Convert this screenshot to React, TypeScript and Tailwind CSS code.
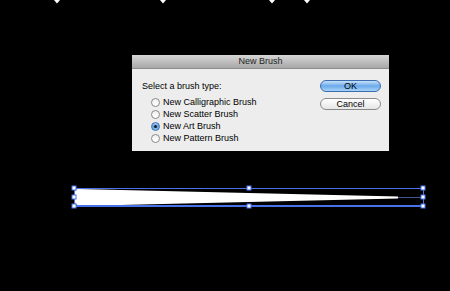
import React from 'react';

const font = { fontFamily: '"Lucida Grande", "Liberation Sans", Arial, sans-serif' };

const markers = [57, 163, 272, 307];

const Radio = ({ checked }: { checked?: boolean }) =>
  checked ? (
    <span className="w-[9px] h-[9px] rounded-full border border-[#3d6fb5] bg-gradient-to-b from-[#a9cdf2] via-[#5d9de0] to-[#8fc1f0] flex items-center justify-center">
      <span className="w-[3px] h-[3px] rounded-full bg-[#1a1a1a]" />
    </span>
  ) : (
    <span className="w-[9px] h-[9px] rounded-full border border-[#8a8a8a] bg-gradient-to-b from-[#f0f0f0] to-[#ffffff]" />
  );

const options = [
  { label: 'New Calligraphic Brush' },
  { label: 'New Scatter Brush' },
  { label: 'New Art Brush', checked: true },
  { label: 'New Pattern Brush' },
];

const handles: [number, number][] = [
  [74, 4], [74, 13], [74, 22],
  [249, 4], [249, 22],
  [423, 4], [423, 13], [423, 22],
];

export default function App() {
  return (
    <div className="w-[450px] h-[291px] bg-black overflow-hidden flex flex-col" style={font}>
      {/* cut-off arrow tips along the top edge */}
      <svg width={450} height={4} className="block">
        {markers.map((x) => (
          <path key={x} d={`M${x - 3},0 L${x + 3},0 L${x},3.5 Z`} fill="#ffffff" />
        ))}
      </svg>

      {/* dialog */}
      <div className="ml-[132px] mt-[51px] w-[257px] h-[96px] flex flex-col bg-[#ededed]">
        <div className="h-[14px] bg-gradient-to-b from-[#d6d6d6] to-[#a8a8a8] border-b border-[#8c8c8c] flex items-center justify-center text-[9px] leading-none text-[#1e1e1e]">
          New Brush
        </div>
        <div className="flex flex-1 text-[9px] leading-[12px] text-black">
          <div className="flex-1 pl-[10px] pt-[11px]">
            <div>Select a brush type:</div>
            <div className="mt-[4px] ml-[9px] flex flex-col">
              {options.map((o) => (
                <div key={o.label} className="h-[12px] flex items-center gap-[3px]">
                  <Radio checked={o.checked} />
                  <span>{o.label}</span>
                </div>
              ))}
            </div>
          </div>
          <div className="w-[69px] pr-[8px] pt-[11px] flex flex-col gap-[6px]">
            <button className="h-[12px] w-[61px] rounded-full border border-[#3a6db0] bg-gradient-to-b from-[#c7e1f8] via-[#6aaaea] to-[#a8d2f7] text-[9px] leading-none text-black flex items-center justify-center">
              OK
            </button>
            <button className="h-[12px] w-[61px] rounded-full border border-[#8a8a8a] bg-gradient-to-b from-[#ffffff] to-[#e6e6e6] text-[9px] leading-none text-black flex items-center justify-center">
              Cancel
            </button>
          </div>
        </div>
      </div>

      {/* selected art brush stroke */}
      <svg width={450} height={26} className="block mt-[33px]">
        <path d="M78,5 L398,12.6 L398,14.4 L120,21 L78,21 Q75,21 75,18 L75,8 Q75,5 78,5 Z" fill="#ffffff" />
        <line x1={398} y1={13.5} x2={421} y2={13.5} stroke="#3a3a3a" strokeWidth={1} />
        <line x1={74} y1={4.5} x2={423} y2={4.5} stroke="#4a72e8" strokeWidth={1} />
        <line x1={74} y1={22} x2={423} y2={22} stroke="#4a72e8" strokeWidth={2} />
        <line x1={74.5} y1={4} x2={74.5} y2={22} stroke="#4a72e8" strokeWidth={1} />
        <line x1={423.5} y1={4} x2={423.5} y2={22} stroke="#4a72e8" strokeWidth={1} />
        <line x1={398} y1={13.5} x2={423} y2={13.5} stroke="#4a72e8" strokeWidth={1} opacity={0.5} />
        {handles.map(([x, y]) => (
          <rect key={`${x}-${y}`} x={x - 2} y={y - 2} width={4} height={4} fill="#ffffff" stroke="#4a72e8" strokeWidth={1} />
        ))}
      </svg>
    </div>
  );
}
